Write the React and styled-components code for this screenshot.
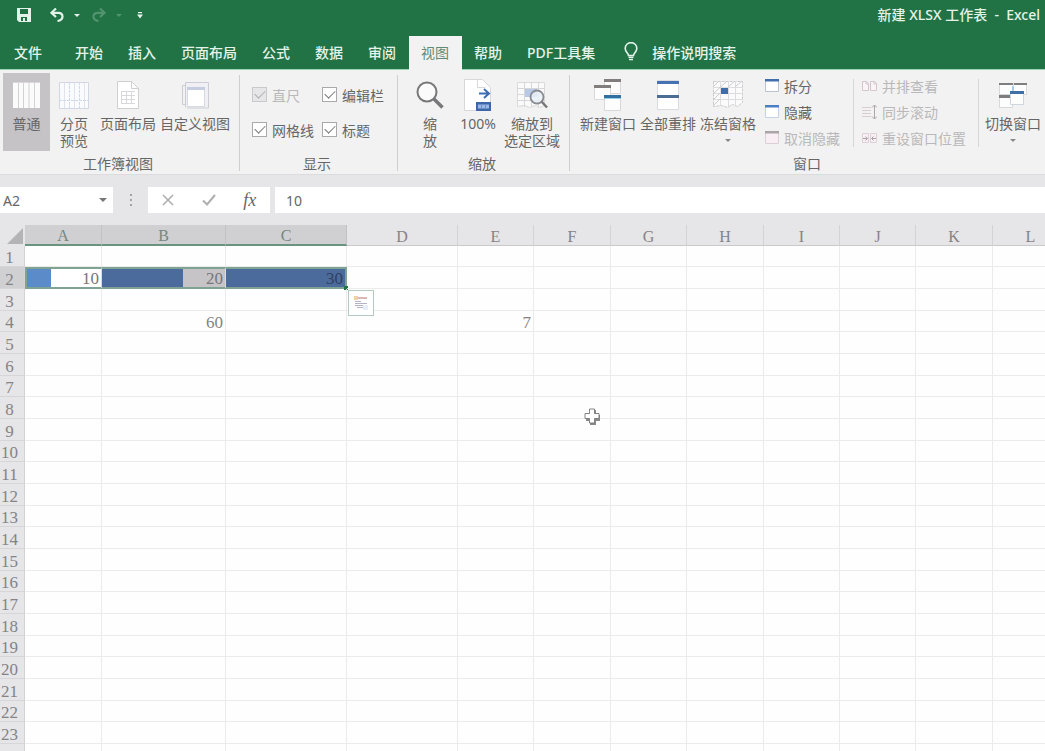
import React from 'react'
import styled, { createGlobalStyle, css } from 'styled-components'


const columns = [
    { name: 'A', width: 77 },
    { name: 'B', width: 124 },
    { name: 'C', width: 121 },
    { name: 'D', width: 111 },
    { name: 'E', width: 76 },
    { name: 'F', width: 77 },
    { name: 'G', width: 76 },
    { name: 'H', width: 77 },
    { name: 'I', width: 76 },
    { name: 'J', width: 76 },
    { name: 'K', width: 77 },
    { name: 'L', width: 76 },
]

const rows = Array.from({ length: 24 }, (_, i) => i + 1)

const cells = {
    A2: { value: 10, percent: 33, bar: '#5b8bc9', rest: '#ffffff' },
    B2: { value: 20, percent: 66, bar: '#4a6b9b', rest: '#c6c4c6' },
    C2: { value: 30, percent: 100, bar: '#4a6b9b', rest: '#c6c4c6' },
    B4: { value: 60 },
    E4: { value: 7 },
}

const tabs = ['开始', '插入', '页面布局', '公式', '数据', '审阅', '视图', '帮助', 'PDF工具集']


const App = () => {

    return (
        <Page>
            <GlobalStyle />
            <TitleBar />
            <Tabs />
            <Ribbon />
            <FormulaBar />
            <Sheet />
        </Page>
    )

}


const TitleBar = () => {

    return (
        <TitleRow>
            <QuickButton aria-label="保存" $w={16}>
                <svg width="14" height="14" viewBox="0 0 14 14">
                    <path d="M0 0h14v14H2l-2-2z" fill="#e4f3ea" />
                    <path d="M3 1h8v5H3zM4 9h6v4H8v-3H6v3H4z" fill="#217346" />
                </svg>
            </QuickButton>
            <QuickButton aria-label="撤消" $w={14} $left={18}>
                <UndoIcon />
            </QuickButton>
            <QuickButton aria-label="撤消选项" $w={10} $left={8}>
                <Caret $color="#e4f3ea" />
            </QuickButton>
            <QuickButton aria-label="恢复" $w={14} $left={10} $faint disabled>
                <UndoIcon flip />
            </QuickButton>
            <QuickButton aria-label="恢复选项" $w={10} $left={8} $faint disabled>
                <Caret $color="#e4f3ea" />
            </QuickButton>
            <QuickButton aria-label="自定义快速访问工具栏" $w={10} $left={11}>
                <svg width="6" height="7" viewBox="0 0 6 7" fill="#e4f3ea">
                    <path d="M1 0h4v1.3H1zM0 2.5h6L3 6.5z" />
                </svg>
            </QuickButton>
            <Title>新建 XLSX 工作表&nbsp; -&nbsp; Excel</Title>
        </TitleRow>
    )

}


const UndoIcon = ({ flip }) => (
    <svg width="14" height="14" viewBox="0 0 14 14" fill="none" stroke="#e4f3ea" strokeWidth="2.2">
        <g transform={flip ? 'translate(14 0) scale(-1 1)' : undefined}>
            <path d="M6 0.5L1.5 4.8L6 9" />
            <path d="M2 4.8H8.2C11 4.8 12.5 6.3 12.5 8.6C12.5 11 11 12.5 7.5 13" />
        </g>
    </svg>
)


const Tabs = () => {

    return (
        <TabRow>
            <Tab $file>文件</Tab>
            {tabs.map(tab => <Tab key={tab} $active={tab === '视图'}>{tab}</Tab>)}
            <Search>
                <svg width="14" height="20" viewBox="0 0 14 20" fill="none" stroke="#e4f3ea" strokeWidth="1.6">
                    <path d="M4.5 13.5C4.5 11 1.2 10 1.2 6.4A5.8 5.8 0 0 1 12.8 6.4C12.8 10 9.5 11 9.5 13.5Z" />
                    <path d="M4.5 15.3H9.5M5 17.5H9" />
                </svg>
                操作说明搜索
            </Search>
        </TabRow>
    )

}


const Ribbon = () => {

    return (
        <RibbonBar>
            <Group>
                <GroupBody $left={3} $right={8}>
                    <Tool icon={<NormalIcon />} width={47} active>普通</Tool>
                    <Tool icon={<PageBreakIcon />} width={48}>分页<br />预览</Tool>
                    <Tool icon={<PageLayoutIcon />} width={60}>页面布局</Tool>
                    <Tool icon={<CustomViewIcon />} width={74}>自定义视图</Tool>
                </GroupBody>
                <GroupName>工作簿视图</GroupName>
            </Group>
            <Group>
                <Checks>
                    <Check><input type="checkbox" defaultChecked disabled />直尺</Check>
                    <Check><input type="checkbox" defaultChecked />编辑栏</Check>
                    <Check><input type="checkbox" defaultChecked />网格线</Check>
                    <Check><input type="checkbox" defaultChecked />标题</Check>
                </Checks>
                <GroupName>显示</GroupName>
            </Group>
            <Group>
                <GroupBody $left={10} $right={10}>
                    <Tool icon={<ZoomIcon />} width={44}>缩<br />放</Tool>
                    <Tool icon={<HundredIcon />} width={52}>100%</Tool>
                    <Tool icon={<ZoomSelectionIcon />} width={56}>缩放到<br />选定区域</Tool>
                </GroupBody>
                <GroupName>缩放</GroupName>
            </Group>
            <Group>
                <GroupBody $left={8} $right={6}>
                    <Tool icon={<NewWindowIcon />} width={60}>新建窗口</Tool>
                    <Tool icon={<ArrangeIcon />} width={60}>全部重排</Tool>
                    <Tool icon={<FreezeIcon />} width={60} menu>冻结窗格</Tool>
                    <SmallList $width={95}>
                        <SmallTool><WindowIcon bar="#3f6ea8" edge="#b9c3d2" />拆分</SmallTool>
                        <SmallTool><WindowIcon bar="#4a7fc4" edge="#c5d2e6" />隐藏</SmallTool>
                        <SmallTool disabled><WindowIcon bar="#aaa5a8" edge="#dccfd6" fill="#f8eef3" />取消隐藏</SmallTool>
                    </SmallList>
                    <SmallList $width={125} $lined>
                        <SmallTool disabled><SideBySideIcon />并排查看</SmallTool>
                        <SmallTool disabled><SyncScrollIcon />同步滚动</SmallTool>
                        <SmallTool disabled><ResetIcon />重设窗口位置</SmallTool>
                    </SmallList>
                    <Divider />
                    <Tool icon={<SwitchIcon />} width={58} menu>切换窗口</Tool>
                </GroupBody>
                <GroupName>窗口</GroupName>
            </Group>
        </RibbonBar>
    )

}


const Tool = ({ icon, width, active, menu, children }) => (
    <ToolButton $width={width} $active={active}>
        <ToolIcon>{icon}</ToolIcon>
        <span>{children}</span>
        {menu && <MenuMark><Caret $color="#888" /></MenuMark>}
    </ToolButton>
)


const FormulaBar = () => {

    return (
        <FormulaRow>
            <NameBox>
                <input aria-label="名称框" defaultValue="A2" />
                <button aria-label="名称列表"><Caret $color="#777" $big /></button>
            </NameBox>
            <Grip viewBox="0 0 4 14" fill="#a5a5a8">
                <path d="M1 1h2v2H1zM1 6h2v2H1zM1 11h2v2H1z" />
            </Grip>
            <EntryButtons>
                <button aria-label="取消">
                    <svg width="12" height="12" viewBox="0 0 12 12" fill="none" stroke="#b0aeb0" strokeWidth="1.6">
                        <path d="M1 1L11 11M11 1L1 11" />
                    </svg>
                </button>
                <button aria-label="输入">
                    <svg width="14" height="12" viewBox="0 0 14 12" fill="none" stroke="#b0aeb0" strokeWidth="2">
                        <path d="M1 6.5L5 10.5L13 1" />
                    </svg>
                </button>
                <button aria-label="插入函数"><Fx>fx</Fx></button>
            </EntryButtons>
            <FormulaInput aria-label="编辑栏" defaultValue="10" />
        </FormulaRow>
    )

}


const Sheet = () => {

    return (
        <SheetArea>
            <Grid>
                <colgroup>
                    <Col $width={25} />
                    {columns.map(col => <Col key={col.name} $width={col.width} />)}
                </colgroup>
                <thead>
                    <tr>
                        <Corner>
                            <svg width="16" height="16" viewBox="0 0 16 16">
                                <path d="M16 0V16H0z" fill="#b4b3b5" />
                            </svg>
                        </Corner>
                        {columns.map((col, i) => (
                            <ColumnHead key={col.name} scope="col" $active={i < 3}>{col.name}</ColumnHead>
                        ))}
                    </tr>
                </thead>
                <tbody>
                    {rows.map(row => (
                        <Row key={row}>
                            <RowHead scope="row" $active={row === 2}>{row}</RowHead>
                            {columns.map((col, i) => {
                                const id = col.name + row
                                return (
                                    <Cell key={id} $data={cells[id]} $selected={row === 2 && i < 3} $first={i === 0} $last={i === 2}>
                                        {cells[id]?.value}
                                        {id === 'C2' && <QuickAnalysis />}
                                    </Cell>
                                )
                            })}
                        </Row>
                    ))}
                </tbody>
            </Grid>
            <Pointer width="17" height="17" viewBox="0 0 17 17">
                <path d="M6 2h6v5h4v6h-4v4H6v-4H2V7h4z" fill="#8a898b" />
                <path d="M5.5 1h5v4.5h4.5v5h-4.5v4.5h-5v-4.5H1v-5h4.5z" fill="#fff" stroke="#777" strokeWidth="0.9" />
            </Pointer>
        </SheetArea>
    )

}


const QuickAnalysis = () => (
    <>
        <FillHandle />
        <AnalysisButton aria-label="快速分析">
            <svg width="16" height="16" viewBox="0 0 16 16">
                <path d="M1 1h4v4H1z" fill="#f3cfa6" />
                <path d="M5 2h9v2H5z" fill="#d9b9b3" />
                <path d="M2 6h6v1H2zM2 8h12v1H2zM2 10h10v1H2zM4 12h6v1H4z" fill="#b4b2c4" />
                <path d="M10 10h5v5h-5z" fill="#e6eefa" />
            </svg>
        </AnalysisButton>
    </>
)


/* ribbon icons */

const NormalIcon = () => (
    <svg width="27" height="26" viewBox="0 0 27 26">
        <path d="M0 0h27v26H0z" fill="#fbfbfb" />
        <path d="M5.5 0v26M10.5 0v26M16 0v26M21.5 0v26" stroke="#d2d1d3" />
        <path d="M0 0.5h27" stroke="#d8d7d9" />
    </svg>
)

const PageBreakIcon = () => (
    <svg width="30" height="27" viewBox="0 0 30 27" fill="none">
        <path d="M0.5 0.5h29v26h-29z" fill="#fafbfe" stroke="#d3d7e4" />
        <path d="M5.5 1v25M15.5 1v25M25.5 1v25" stroke="#e2e3e9" />
        <path d="M10.5 0v27M20.5 0v27M0 18.5h30" stroke="#cdd8ef" strokeDasharray="3 1" />
    </svg>
)

const PageLayoutIcon = () => (
    <svg width="22" height="28" viewBox="0 0 22 28" fill="none" stroke="#cfced0">
        <path d="M0.5 0.5h14l7 7v20h-21z" fill="#fff" />
        <path d="M14.5 0.5v7h7" />
        <path d="M4 10.5h14M4 14.5h14M4 18.5h14M4 22.5h14M4.5 10v13M9.5 10v13M14.5 10v13" stroke="#d8d7d9" />
    </svg>
)

const CustomViewIcon = () => (
    <svg width="27" height="27" viewBox="0 0 27 27" fill="none">
        <path d="M5 22.5H0.5V3.5H3M3.5 25.5V0.5H26.5V26H5" stroke="#cccdd4" />
        <path d="M4 1h22v24H4z" fill="#f0f0f4" />
        <path d="M5.5 5.5h17v19h-17z" fill="#fff" stroke="#d8dae3" />
        <path d="M5 5h18v3H5z" fill="#c6cde0" />
    </svg>
)

const ZoomIcon = () => (
    <svg width="28" height="28" viewBox="0 0 28 28" fill="none">
        <circle cx="11" cy="11" r="9.5" fill="#fbfbfb" stroke="#78777a" strokeWidth="2" />
        <path d="M17.5 17.5L26.5 26.5" stroke="#78777a" strokeWidth="3.5" />
    </svg>
)

const HundredIcon = () => (
    <svg width="28" height="32" viewBox="0 0 28 32" fill="none">
        <path d="M0.5 0.5h18l8 8v23h-26z" fill="#fff" stroke="#d8d7da" />
        <path d="M13.5 0.5v8h8" stroke="#d8d7da" />
        <path d="M15 14.5h9M20 10l5 4.5l-5 4.5" stroke="#3c6db5" strokeWidth="2" />
        <path d="M12 23h15v9H12z" fill="#3d68a8" />
        <path d="M14 25.5h11v4H14z" fill="#9bb9e3" />
        <path d="M17.5 25v5M21.5 25v5" stroke="#6b91c8" />
    </svg>
)

const ZoomSelectionIcon = () => (
    <svg width="31" height="28" viewBox="0 0 31 28" fill="none">
        <path d="M0.5 1.5h27v23l-5 2l-4-2l-6 2l-5-2l-7 1z" fill="#fafafa" stroke="#dad9db" />
        <path d="M0 7.5h27M0 13.5h27M0 19.5h27M7.5 1v25M14.5 1v25M21.5 1v25" stroke="#d7d6d9" />
        <path d="M8 8h12v8H8z" fill="#b8c9e6" />
        <circle cx="20" cy="16" r="6.5" fill="#eaf1fa" fillOpacity="0.8" stroke="#8a8c92" strokeWidth="1.8" />
        <path d="M24.5 20.5L30 26.5" stroke="#77767a" strokeWidth="2.5" />
    </svg>
)

const NewWindowIcon = () => (
    <svg width="28" height="32" viewBox="0 0 28 32">
        <path d="M10.5 1.5h16v13h-16z" fill="#fdfdfd" stroke="#d8d7da" />
        <path d="M10 0h17v3H10z" fill="#807d7c" />
        <path d="M0.5 7.5h16v13h-16z" fill="#fdfdfd" stroke="#d8d7da" />
        <path d="M0 6h17v3H0z" fill="#807d7c" />
        <path d="M10.5 17.5h16v14h-16z" fill="#fdfdfd" stroke="#d8d7da" />
        <path d="M10 16h17v3H10z" fill="#31709e" />
        <path d="M10 19h17v1H10z" fill="#8fd0f0" />
    </svg>
)

const ArrangeIcon = () => (
    <svg width="22" height="30" viewBox="0 0 22 30">
        <path d="M0.5 0.5h21v29h-21z" fill="#fff" stroke="#dbdbdf" />
        <path d="M0 1h22v3H0z" fill="#4672b4" />
        <path d="M0 15h22v3H0z" fill="#4a6d92" />
    </svg>
)

const FreezeIcon = () => (
    <svg width="30" height="28" viewBox="0 0 30 28" fill="none">
        <path d="M0.5 0.5h29v21l-5 4l-5-2l-5 3l-6-2l-8 1z" fill="#fbfbfb" stroke="#cbcacd" strokeDasharray="3 1" />
        <path d="M0 6.5h30M0 12.5h30M0 18.5h30M7.5 0v25M15.5 0v25M22.5 0v24" stroke="#dddcdf" />
        <path d="M0 6l6-6M0 13L14 0M15 6L22 0M22 6L29 0M0 19L7 12M0 25L7 18" stroke="#cccbce" />
        <path d="M8 7h7v6H8z" fill="#3f6ea8" />
    </svg>
)

const SwitchIcon = () => (
    <svg width="28" height="27" viewBox="0 0 28 27">
        <path d="M0.5 1.5h14v11h-14zM14.5 1.5h13v11h-13z" fill="#fdfdfd" stroke="#d8d7da" />
        <path d="M0 1h14v2H0zM15 1h13v2H15z" fill="#7f7d7e" />
        <path d="M0.5 13.5h13v12h-13z" fill="#fdfdfd" stroke="#d8d7da" />
        <path d="M0 13h11v3H0z" fill="#7f7d7e" />
        <path d="M14 4v5" stroke="#a8ccec" strokeWidth="2" />
        <path d="M11.5 10.5h13v12h-13z" fill="#fdfdfd" stroke="#cfd6e0" />
        <path d="M11 9h14v3H11z" fill="#3d70a8" />
    </svg>
)

const WindowIcon = ({ bar, edge, fill = '#fff' }) => (
    <svg width="14" height="14" viewBox="0 0 14 14">
        <path d="M0.5 0.5h13v12h-13z" fill={fill} stroke={edge} />
        <path d="M0 0h14v2.5H0z" fill={bar} />
    </svg>
)

const SideBySideIcon = () => (
    <svg width="15" height="12" viewBox="0 0 15 12" fill="none" stroke="#d3c6cc">
        <path d="M0.5 1.5h4l2 2v7h-6zM8.5 1.5h4l2 2v7h-6z" fill="#faf4f7" />
        <path d="M4 1v3h3M12 1v3h3" />
    </svg>
)

const SyncScrollIcon = () => (
    <svg width="15" height="16" viewBox="0 0 15 16" fill="none">
        <path d="M0 3.5h9M0 6.5h9M0 9.5h9M0 12.5h9" stroke="#d9ccd2" />
        <path d="M12.5 1v14M10 3.5L12.5 1L15 3.5M10 12.5L12.5 15L15 12.5" stroke="#aaa6a9" />
    </svg>
)

const ResetIcon = () => (
    <svg width="15" height="12" viewBox="0 0 15 12" fill="none">
        <path d="M0.5 1.5h6v9h-6zM8.5 1.5h6v9h-6z" fill="#f7eff3" stroke="#ddd0d6" />
        <path d="M1 6.5h4M3.5 4.5l2 2l-2 2M14 6.5h-4M11.5 4.5l-2 2l2 2" stroke="#aaa1a7" />
    </svg>
)


const GlobalStyle = createGlobalStyle`

    * {
        box-sizing: border-box;
    }

    body {
        margin: 0;
        font-family: "Noto Sans", "Noto Sans CJK SC", sans-serif;
        font-size: 14px;
        color: #666;
        overflow: hidden;
    }

    button {
        margin: 0;
        padding: 0;
        border: 0;
        background: none;
        font: inherit;
        color: inherit;
    }

    input {
        font: inherit;
        color: inherit;
    }

`

const Page = styled.div`

    display: flex;
    flex-direction: column;
    height: 100vh;
    background: #e6e6e8;

`

const TitleRow = styled.header`

    display: flex;
    align-items: center;
    height: 36px;
    padding: 0 5px 6px 16px;
    background: #217346;
    color: #e4f3ea;

`

const QuickButton = styled.button`

    display: grid;
    place-items: center;
    width: ${props => props.$w}px;
    height: 20px;
    margin-left: ${props => props.$left || 0}px;
    opacity: ${props => props.$faint ? 0.25 : 1};

`

const Caret = styled.span`

    display: block;
    border: ${props => props.$big ? 4 : 3}px solid transparent;
    border-top-color: ${props => props.$color};
    border-bottom: 0;

`

const Title = styled.span`

    margin-left: auto;
    white-space: nowrap;
    font-weight: 500;
    line-height: 20px;

`

const TabRow = styled.nav`

    display: flex;
    flex-shrink: 0;
    height: 34px;
    padding-left: 2px;
    background: #217346;
    color: #e4f3ea;
    box-shadow: inset 0 -1px #9fd3b6;
    white-space: nowrap;

`

const Tab = styled.button`

    padding: 0 13px 2px 12px;
    font-weight: 500;

    ${props => props.$file && css`
        margin-right: 8px;
    `}

    ${props => props.$active && css`
        background: #f2f2f2;
        color: #5f8a73;
        font-weight: 400;
    `}

`

const Search = styled.button`

    display: flex;
    align-items: center;
    gap: 14px;
    margin-left: 16px;
    padding-bottom: 2px;
    font-weight: 500;

`

const RibbonBar = styled.div`

    display: flex;
    flex-shrink: 0;
    height: 105px;
    padding-top: 3px;
    background: #f2f2f2;
    border-bottom: 1px solid #dcdcde;
    overflow: hidden;
    white-space: nowrap;

`

const Group = styled.section`

    display: flex;
    flex-direction: column;
    flex-shrink: 0;
    background: linear-gradient(#cfcfd1, #cfcfd1) right 2px / 1px 96px no-repeat;

`

const GroupBody = styled.div`

    display: flex;
    height: 82px;
    padding: 0 ${props => props.$right}px 0 ${props => props.$left}px;

`

const GroupName = styled.div`

    padding-right: 4px;
    line-height: 20px;
    text-align: center;

`

const ToolButton = styled.button`

    display: flex;
    flex-direction: column;
    align-items: center;
    width: ${props => props.$width}px;
    height: 78px;
    padding-top: 4px;
    line-height: 17px;
    background: ${props => props.$active ? '#c5c3c5' : 'none'};

`

const ToolIcon = styled.span`

    display: grid;
    place-items: center;
    height: 36px;
    margin-bottom: 2px;

`

const MenuMark = styled.span`

    padding-top: 7px;

`

const Checks = styled.div`

    display: grid;
    grid-template-columns: 70px 76px;
    grid-template-rows: 35px 35px;
    height: 82px;
    padding: 4px 0 0 12px;

`

const Check = styled.label`

    display: flex;
    align-items: center;
    gap: 5px;

    input {
        appearance: none;
        display: grid;
        place-items: center;
        width: 15px;
        height: 15px;
        margin: 0;
        border: 1px solid #a9a8aa;
        background: #fff;
    }

    input:checked::after {
        content: "";
        width: 9px;
        height: 5px;
        margin-bottom: 3px;
        border: solid #7c7b7d;
        border-width: 0 0 1px 1px;
        transform: rotate(-45deg);
    }

    &:has(input:disabled) {
        color: #b9b8ba;
    }

    input:disabled {
        border-color: #c9c8ca;
        background: #e6e5e7;
    }

    input:disabled::after {
        border-color: #b0afb1;
    }

`

const SmallList = styled.div`

    display: flex;
    flex-direction: column;
    width: ${props => props.$width}px;
    height: 78px;
    padding-left: 7px;

    ${props => props.$lined && css`
        padding-left: 9px;
        background: linear-gradient(#d6d6d8, #d6d6d8) 0 6px / 1px 68px no-repeat;
    `}

`

const Divider = styled.span`

    width: 1px;
    height: 68px;
    margin: 6px 5px 0 0;
    background: #d6d6d8;

`

const SmallTool = styled.button`

    display: flex;
    align-items: center;
    gap: 5px;
    height: 26px;
    color: ${props => props.disabled ? '#b9b8ba' : 'inherit'};

`

const FormulaRow = styled.div`

    display: flex;
    flex-shrink: 0;
    height: 50px;
    padding: 12px 0;

`

const NameBox = styled.div`

    display: flex;
    width: 113px;
    background: #fff;

    input {
        flex: 1;
        min-width: 0;
        padding: 0 3px;
        border: 0;
        background: none;
    }

    button {
        display: grid;
        place-items: center;
        width: 20px;
    }

`

const Grip = styled.svg`

    width: 4px;
    height: 14px;
    margin: 6px 15px 0 16px;

`

const EntryButtons = styled.div`

    display: grid;
    grid-template-columns: repeat(3, 1fr);
    width: 122px;
    margin-right: 5px;
    background: #fff;

    button {
        display: grid;
        place-items: center;
    }

`

const Fx = styled.i`

    font-family: "Liberation Serif", serif;
    font-size: 18px;
    line-height: 20px;

`

const FormulaInput = styled.input`

    flex: 1;
    min-width: 0;
    padding: 0 11px;
    border: 0;
    background: #fff;

`

const SheetArea = styled.main`

    position: relative;
    flex: 1;
    min-height: 0;
    overflow: hidden;
    font-family: "Liberation Serif", serif;
    font-size: 17px;
    line-height: 16px;
    color: #858386;

`

const Grid = styled.table`

    table-layout: fixed;
    width: 100%;
    border-collapse: separate;
    border-spacing: 0;
    background: #fefefe;

    th {
        padding: 4px 0 0;
        font-weight: 400;
        background: #e6e5e7;
    }

`

const Col = styled.col`

    width: ${props => props.$width}px;

`

const Corner = styled.td`

    height: 21px;
    padding: 0 2px 2px 0;
    background: #e6e5e7;
    line-height: 0;
    text-align: right;
    vertical-align: bottom;

`

const ColumnHead = styled.th`

    height: 21px;
    border-right: 1px solid #d3d2d4;
    border-bottom: 1px solid #c9c8ca;
    font-size: 16px;

    ${props => props.$active && css`
        && {
            padding-top: 3px;
            background: #d0cfd1;
            color: #74877e;
            border-right-color: #c2c2c4;
            border-bottom: 2px solid #6b9480;
        }
    `}

`

const Row = styled.tr`

    height: 22px;

    &:nth-child(3n + 1) {
        height: 21px;
    }

`

const RowHead = styled.th`

    border-right: 1px solid #d3d2d4;
    border-bottom: 1px solid #d6d5d7;

    && {
        padding-right: 5px;
        background: ${props => props.$active ? '#d0cfd1' : '#e6e5e7'};
    }

`

const Cell = styled.td`

    position: relative;
    padding: 4px 2px 0 0;
    border-right: 1px solid #ebebec;
    border-bottom: 1px solid #ebebec;
    text-align: right;

    ${props => props.$data?.percent && css`
        background: linear-gradient(
            to right,
            ${props.$data.bar} ${props.$data.percent}%,
            ${props.$data.rest} ${props.$data.percent}%
        );
    `}

    ${props => props.$selected && css`
        padding-top: 2px;
        border-top: 2px solid #7fa392;
        border-bottom: 2px solid #7fa392;
        border-left: ${props.$first ? '2px solid #7fa392' : 0};
        border-right: ${props.$last ? '2px solid #7fa392' : '1px solid #d5dbe4'};
        color: ${props.$last ? '#34405c' : '#77757a'};
    `}

`

const FillHandle = styled.span`

    position: absolute;
    right: -3px;
    bottom: -3px;
    width: 4px;
    height: 4px;
    background: #217346;

`

const AnalysisButton = styled.button`

    position: absolute;
    top: 100%;
    left: 100%;
    z-index: 1;
    display: grid;
    place-items: center;
    width: 26px;
    height: 26px;
    margin: 3px;
    border: 1px solid #b5cabf;
    background: #fff;

`

const Pointer = styled.svg`

    position: absolute;
    top: 183px;
    left: 584px;

`


export default App
